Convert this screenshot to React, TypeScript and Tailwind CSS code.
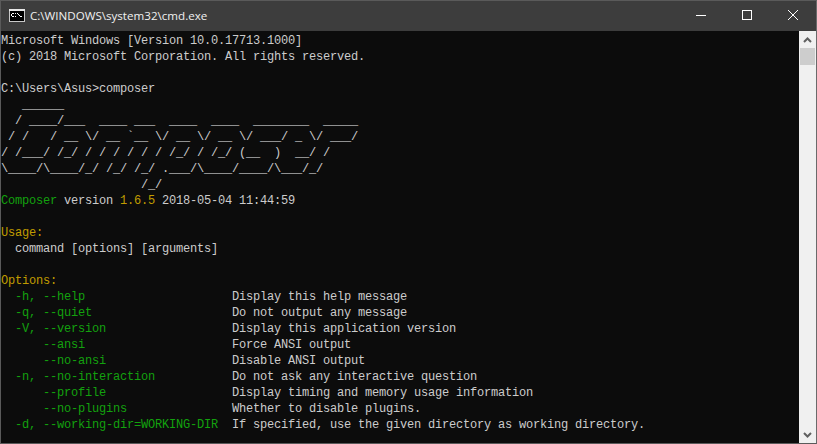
import { ReactNode } from "react";

const g = "text-[#13a10e]";
const y = "text-[#c19c00]";

const logo = [
  "   ______",
  "  / ____/___  ____ ___  ____  ____  ________  _____",
  " / /   / __ \\/ __ `__ \\/ __ \\/ __ \\/ ___/ _ \\/ ___/",
  "/ /___/ /_/ / / / / / / /_/ / /_/ (__  )  __/ /",
  "\\____/\\____/_/ /_/ /_/ .___/\\____/____/\\___/_/",
  "                    /_/",
];

const options = [
  ["  -h, --help", "Display this help message"],
  ["  -q, --quiet", "Do not output any message"],
  ["  -V, --version", "Display this application version"],
  ["      --ansi", "Force ANSI output"],
  ["      --no-ansi", "Disable ANSI output"],
  ["  -n, --no-interaction", "Do not ask any interactive question"],
  ["      --profile", "Display timing and memory usage information"],
  ["      --no-plugins", "Whether to disable plugins."],
  ["  -d, --working-dir=WORKING-DIR", "If specified, use the given directory as working directory."],
];

function Line({ children }: { children?: ReactNode }) {
  return <div className="h-4 leading-4 whitespace-pre">{children}</div>;
}

function CmdIcon() {
  return (
    <svg width="16" height="16" viewBox="0 0 16 16" shapeRendering="crispEdges">
      <rect x="0" y="1" width="16" height="13" fill="#c8c8c8" />
      <rect x="0" y="1" width="16" height="2" fill="#e8e8e8" />
      <rect x="1" y="3" width="14" height="10" fill="#000" />
      <path d="M3 5h2v1H3zM2 6h1v2H2zM3 8h2v1H3zM6 5h1v1H6zM6 8h1v1H6zM8 5h1v1H8zM9 6h1v1H9zM10 7h1v1h-1zM11 8h2v1h-2z" fill="#fff" />
    </svg>
  );
}

export default function App() {
  return (
    <div className="w-[817px] h-[444px] overflow-hidden flex flex-col bg-[#3e3e3e] border border-[#5a5a5a] border-r-[#6a6a6a]">
      {/* Title bar */}
      <div className="h-[30px] shrink-0 flex items-center bg-[#3d3d3d] text-white">
        <div className="ml-[8px] mr-[5px] flex">
          <CmdIcon />
        </div>
        <span className="text-[11.6px] font-['Open_Sans',sans-serif] text-[#f0f0f0]">C:\WINDOWS\system32\cmd.exe</span>
        <div className="ml-auto flex h-full">
          <div className="w-[46px] flex items-center justify-center pb-[2px]">
            <svg width="10" height="10" viewBox="0 0 10 10" shapeRendering="crispEdges"><path d="M0 5h10v1H0z" fill="#fff" /></svg>
          </div>
          <div className="w-[46px] flex items-center justify-center pb-[2px]">
            <svg width="10" height="10" viewBox="0 0 10 10" shapeRendering="crispEdges"><path d="M.5.5h9v9h-9z" fill="none" stroke="#fff" /></svg>
          </div>
          <div className="w-[46px] flex items-center justify-center pb-[2px]">
            <svg width="10" height="10" viewBox="0 0 10 10"><path d="M0 0l10 10M10 0L0 10" fill="none" stroke="#fff" strokeWidth="1" /></svg>
          </div>
        </div>
      </div>

      <div className="flex-1 flex min-h-0">
        {/* Console text */}
        <div className="flex-1 bg-[#0c0c0c] text-[#cccccc] pt-[2px] overflow-hidden font-['Liberation_Mono',monospace] text-[12px] tracking-[-0.2px]">
          <Line>Microsoft Windows [Version 10.0.17713.1000]</Line>
          <Line>(c) 2018 Microsoft Corporation. All rights reserved.</Line>
          <Line />
          <Line>C:\Users\Asus&gt;composer</Line>
          {logo.map((l, i) => (
            <Line key={i}>{l}</Line>
          ))}
          <Line>
            <span className={g}>Composer</span> version <span className={y}>1.6.5</span> 2018-05-04 11:44:59
          </Line>
          <Line />
          <Line><span className={y}>Usage:</span></Line>
          <Line>  command [options] [arguments]</Line>
          <Line />
          <Line><span className={y}>Options:</span></Line>
          {options.map(([flag, desc]) => (
            <Line key={flag}>
              <span className={g}>{flag.padEnd(33)}</span>{desc}
            </Line>
          ))}
        </div>

        {/* Scrollbar */}
        <div className="w-[17px] shrink-0 flex flex-col bg-[#f0f0f0]">
          <div className="h-[17px] flex items-center justify-center">
            <svg width="9" height="6" viewBox="0 0 9 6"><path d="M1 5l3.5-3.5L8 5" fill="none" stroke="#606060" strokeWidth="2" /></svg>
          </div>
          <div className="h-[17px] mx-[1px] bg-[#cdcdcd]" />
          <div className="mt-auto h-[17px] flex items-center justify-center">
            <svg width="9" height="6" viewBox="0 0 9 6"><path d="M1 1l3.5 3.5L8 1" fill="none" stroke="#606060" strokeWidth="2" /></svg>
          </div>
        </div>
      </div>
    </div>
  );
}
